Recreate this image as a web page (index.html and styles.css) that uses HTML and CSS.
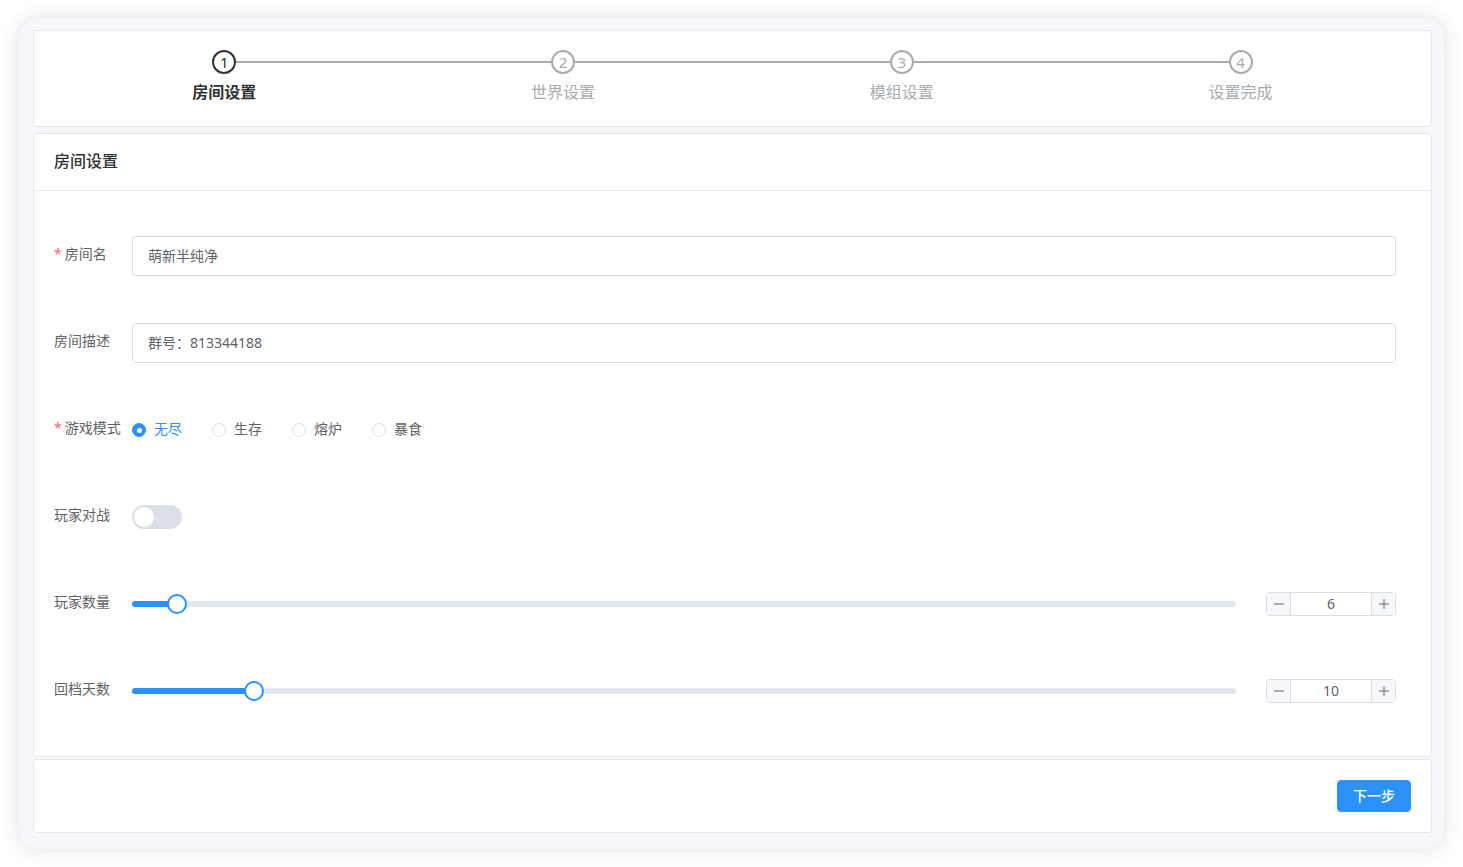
FILE: index.html
```html
<!DOCTYPE html>
<html lang="zh-CN">
<head>
    <meta charset="UTF-8">
    <meta name="viewport" content="width=device-width, initial-scale=1.0">
    <title>房间设置</title>
    <link rel="stylesheet" href="styles.css">
</head>
<body>
    <div class="shell">
        <section class="card steps">
            <div class="step is-active">
                <div class="step-head"><span class="step-icon">1</span></div>
                <div class="step-title">房间设置</div>
            </div>
            <div class="step">
                <div class="step-head"><span class="step-icon">2</span></div>
                <div class="step-title">世界设置</div>
            </div>
            <div class="step">
                <div class="step-head"><span class="step-icon">3</span></div>
                <div class="step-title">模组设置</div>
            </div>
            <div class="step">
                <div class="step-head"><span class="step-icon">4</span></div>
                <div class="step-title">设置完成</div>
            </div>
        </section>

        <section class="card main">
            <div class="card-header">房间设置</div>
            <div class="card-body">
                <form class="form">
                    <div class="form-item">
                        <label class="form-label required" for="room-name">房间名</label>
                        <div class="form-content">
                            <input class="input" type="text" id="room-name" value="萌新半纯净">
                        </div>
                    </div>

                    <div class="form-item">
                        <label class="form-label" for="room-desc">房间描述</label>
                        <div class="form-content">
                            <input class="input" type="text" id="room-desc" value="群号：813344188">
                        </div>
                    </div>

                    <div class="form-item">
                        <label class="form-label required">游戏模式</label>
                        <div class="form-content">
                            <span class="radio is-checked"><span class="radio-inner"></span>无尽</span>
                            <span class="radio"><span class="radio-inner"></span>生存</span>
                            <span class="radio"><span class="radio-inner"></span>熔炉</span>
                            <span class="radio"><span class="radio-inner"></span>暴食</span>
                        </div>
                    </div>

                    <div class="form-item">
                        <label class="form-label">玩家对战</label>
                        <div class="form-content">
                            <span class="switch"><span class="switch-knob"></span></span>
                        </div>
                    </div>

                    <div class="form-item">
                        <label class="form-label">玩家数量</label>
                        <div class="form-content">
                            <div class="slider-runway">
                                <div class="slider-bar" style="width: 4.08%"></div>
                                <span class="slider-button" style="left: 4.08%"></span>
                            </div>
                            <div class="number">
                                <span class="number-btn minus"><svg width="10" height="10" viewBox="0 0 10 10"><path d="M0 5h10" stroke="currentColor" stroke-width="1"/></svg></span>
                                <span class="number-value">6</span>
                                <span class="number-btn plus"><svg width="10" height="10" viewBox="0 0 10 10"><path d="M0 5h10M5 0v10" stroke="currentColor" stroke-width="1"/></svg></span>
                            </div>
                        </div>
                    </div>

                    <div class="form-item">
                        <label class="form-label">回档天数</label>
                        <div class="form-content">
                            <div class="slider-runway">
                                <div class="slider-bar" style="width: 11.05%"></div>
                                <span class="slider-button" style="left: 11.05%"></span>
                            </div>
                            <div class="number">
                                <span class="number-btn minus"><svg width="10" height="10" viewBox="0 0 10 10"><path d="M0 5h10" stroke="currentColor" stroke-width="1"/></svg></span>
                                <span class="number-value">10</span>
                                <span class="number-btn plus"><svg width="10" height="10" viewBox="0 0 10 10"><path d="M0 5h10M5 0v10" stroke="currentColor" stroke-width="1"/></svg></span>
                            </div>
                        </div>
                    </div>
                </form>
            </div>
        </section>

        <section class="card footer">
            <button class="btn" type="button">下一步</button>
        </section>
    </div>
</body>
</html>
```

FILE: styles.css
```css
* {
    box-sizing: border-box;
}

body {
    margin: 0;
    padding: 18px 19px;
    background: #fff;
    font-family: "Noto Sans", "Noto Sans CJK SC", sans-serif;
    color: #606266;
}

.shell {
    background: #f6f7fb;
    border-radius: 20px;
    padding: 12px 12px 16px 14px;
    box-shadow: 0 0 20px rgba(0, 0, 0, 0.13);
}

.card {
    background: #fff;
    border: 1px solid #e6e8ee;
    border-radius: 4px;
}

/* steps */
.steps {
    display: flex;
    padding: 19px 21px 14px;
}

.step {
    flex: 1;
    display: flex;
    flex-direction: column;
    align-items: center;
}

.step-head {
    position: relative;
    width: 100%;
    height: 24px;
    display: flex;
    justify-content: center;
}

.step-head::after {
    content: "";
    position: absolute;
    left: 50%;
    top: 11px;
    width: 100%;
    height: 2px;
    background: #a8abb2;
}

.step:last-child .step-head::after {
    display: none;
}

.step-icon {
    position: relative;
    z-index: 1;
    width: 24px;
    height: 24px;
    border: 2px solid #a8abb2;
    border-radius: 50%;
    background: #fff;
    display: flex;
    align-items: center;
    justify-content: center;
    font-size: 15px;
    line-height: 1;
    color: #a8abb2;
}

.step-title {
    font-size: 16px;
    line-height: 36px;
    padding-bottom: 2px;
    color: #a8abb2;
}

.step.is-active .step-icon {
    border-color: #303133;
    color: #303133;
}

.step.is-active .step-title {
    color: #303133;
    font-weight: 700;
}

/* main card */
.main {
    margin-top: 6px;
}

.card-header {
    padding: 17px 20px 19px;
    font-size: 16px;
    line-height: 20px;
    font-weight: 500;
    color: #303133;
    border-bottom: 1px solid #e6e8ee;
}

.card-body {
    padding: 45px 35px 45px 20px;
}

.form {
    display: flex;
    flex-direction: column;
    gap: 47px;
    margin: 0;
}

.form-item {
    display: flex;
    align-items: center;
    height: 40px;
}

.form-label {
    width: 78px;
    flex: none;
    font-size: 14px;
    line-height: 36px;
    padding-bottom: 4px;
    color: #606266;
}

.required::before {
    content: "*";
    color: #f56c6c;
    margin-right: 3px;
}

.form-content {
    flex: 1;
    display: flex;
    align-items: center;
}

.input {
    width: 100%;
    height: 40px;
    border: 1px solid #dcdfe6;
    border-radius: 4px;
    padding: 0 15px 3px;
    font-family: inherit;
    font-size: 14px;
    color: #606266;
    outline: none;
}

/* radio */
.radio {
    display: flex;
    align-items: center;
    margin-right: 30px;
    font-size: 14px;
    line-height: 20px;
    padding-bottom: 2px;
    color: #606266;
}

.radio-inner {
    width: 14px;
    height: 14px;
    margin-right: 8px;
    margin-top: 2px;
    border: 1px solid #dcdfe6;
    border-radius: 50%;
    background: #fff;
    display: flex;
    align-items: center;
    justify-content: center;
}

.radio.is-checked {
    color: #2b91fb;
}

.radio.is-checked .radio-inner {
    background: #2b91fb;
    border-color: #2b91fb;
}

.radio.is-checked .radio-inner::after {
    content: "";
    width: 5px;
    height: 5px;
    border-radius: 50%;
    background: #fff;
}

/* switch */
.switch {
    width: 50px;
    height: 24px;
    padding: 2px;
    border-radius: 12px;
    background: #dcdfe6;
    display: flex;
}

.switch-knob {
    width: 20px;
    height: 20px;
    border-radius: 50%;
    background: #fff;
}

/* slider */
.slider-runway {
    flex: 1;
    position: relative;
    height: 6px;
    margin-right: 30px;
    border-radius: 3px;
    background: #e4e7ed;
}

.slider-bar {
    height: 100%;
    border-radius: 3px;
    background: #2b91fb;
}

.slider-button {
    position: absolute;
    top: 50%;
    width: 20px;
    height: 20px;
    border: 2px solid #2b91fb;
    border-radius: 50%;
    background: #fff;
    transform: translate(-50%, -50%);
}

/* number input */
.number {
    width: 130px;
    height: 24px;
    flex: none;
    display: flex;
    border: 1px solid #dcdfe6;
    border-radius: 4px;
    overflow: hidden;
}

.number-btn {
    width: 24px;
    flex: none;
    display: flex;
    align-items: center;
    justify-content: center;
    background: #f5f7fa;
    color: #606266;
}

.number-btn.minus {
    border-right: 1px solid #dcdfe6;
}

.number-btn.plus {
    border-left: 1px solid #dcdfe6;
}

.number-value {
    flex: 1;
    text-align: center;
    font-size: 14px;
    line-height: 21px;
    color: #606266;
}

/* footer */
.footer {
    margin-top: 2px;
    padding: 20px;
    display: flex;
    justify-content: flex-end;
}

.btn {
    height: 32px;
    padding: 0 15px 2px;
    border: 1px solid #2b91fb;
    border-radius: 4px;
    background: #2b91fb;
    color: #fff;
    font-family: inherit;
    font-size: 14px;
    font-weight: 500;
}
```
